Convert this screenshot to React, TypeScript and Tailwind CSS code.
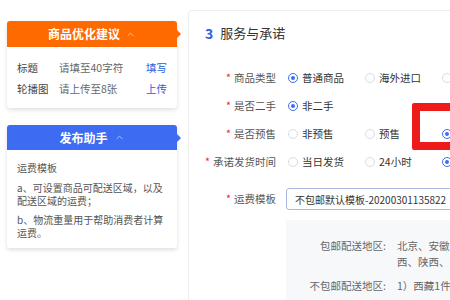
import { ChevronUp } from 'lucide-react';

const font = { fontFamily: '"Noto Sans CJK SC", "Noto Sans", sans-serif' };

const Radio = ({ checked, label }: { checked?: boolean; label?: string }) => (
    <div className="flex w-[77px] shrink-0 items-center gap-[4px]">
        {checked ? (
            <span className="flex h-[10px] w-[10px] items-center justify-center rounded-full border-[1.5px] border-[#3d6ef2] bg-white">
                <span className="h-[4px] w-[4px] rounded-full bg-[#3d6ef2]"></span>
            </span>
        ) : (
            <span className="h-[10px] w-[10px] rounded-full border border-[#d9dce2] bg-white"></span>
        )}
        {label && <span className="text-[10.5px] text-[#333]">{label}</span>}
    </div>
);

const Row = ({ label, children }: { label: string; children?: React.ReactNode }) => (
    <div className="flex h-[28px] items-center">
        <div className="w-[87px] shrink-0 whitespace-nowrap text-right text-[10.5px] text-[#555]">
            <span className="mr-[3px] text-[#f5222d]">*</span>
            {label}
        </div>
        <div className="ml-[12px] flex items-center">{children}</div>
    </div>
);

const App = () => {
    return (
        <div className="relative flex h-[300px] w-[450px] overflow-hidden bg-white" style={font}>
            {/* left side tips */}
            <div className="w-[188px] shrink-0 pl-[7px] pt-[21px]">
                <div className="w-[170px] rounded-[3px] bg-white shadow-[0_2px_4px_rgba(0,0,0,0.13)]">
                    <div className="relative flex h-[26px] items-center justify-center gap-[5px] rounded-t-[3px] bg-[#ff6a00] text-[12px] font-bold text-white">
                        商品优化建议
                        <ChevronUp size={11} strokeWidth={1.5} className="text-white/80" />
                        <span className="absolute right-[-4px] top-[9px] h-0 w-0 border-y-[4px] border-l-[4px] border-y-transparent border-l-[#ff6a00]"></span>
                    </div>
                    <div className="px-[10px] pb-[9px] pt-[11px] text-[10.5px]">
                        <div className="flex h-[20px] items-center">
                            <span className="w-[42px] text-[#444]">标题</span>
                            <span className="flex-1 text-[#666]">请填至40字符</span>
                            <span className="text-[#2a5ed8]">填写</span>
                        </div>
                        <div className="mt-[1px] flex h-[20px] items-center">
                            <span className="w-[42px] text-[#444]">轮播图</span>
                            <span className="flex-1 text-[#666]">请上传至8张</span>
                            <span className="text-[#2a5ed8]">上传</span>
                        </div>
                    </div>
                </div>

                <div className="mt-[17px] w-[170px] rounded-[3px] bg-white shadow-[0_2px_4px_rgba(0,0,0,0.13)]">
                    <div className="relative flex h-[25px] items-center justify-center gap-[6px] rounded-t-[3px] bg-[#3d6cf2] text-[12px] font-bold text-white">
                        发布助手
                        <ChevronUp size={11} strokeWidth={1.5} className="text-white/80" />
                        <span className="absolute right-[-4px] top-[9px] h-0 w-0 border-y-[4px] border-l-[4px] border-y-transparent border-l-[#3d6cf2]"></span>
                    </div>
                    <div className="whitespace-nowrap px-[10px] pb-[9px] pt-[10px] text-[10px] leading-[13px] text-[#555]">
                        <p className="leading-[16px]">运费模板</p>
                        <p className="mt-[5px]">
                            a、可设置商品可配送区域，以及
                            <br />
                            配送区域的运费；
                        </p>
                        <p className="mt-[6px]">
                            b、物流重量用于帮助消费者计算
                            <br />
                            运费。
                        </p>
                    </div>
                </div>
            </div>

            {/* right panel */}
            <div className="mt-[10px] flex-1 rounded-tl-[4px] border border-r-0 border-b-0 border-[#eceef2] bg-white">
                <div className="box-content flex h-[20px] items-center gap-[7px] pl-[16px] pt-[12px]">
                    <span className="text-[14px] font-bold text-[#2f62e0]">3</span>
                    <span className="text-[13px] text-[#333]">服务与承诺</span>
                </div>

                <div className="mt-[21px]">
                    <Row label="商品类型">
                        <Radio checked label="普通商品" />
                        <Radio label="海外进口" />
                        <Radio />
                    </Row>
                    <Row label="是否二手">
                        <Radio checked label="非二手" />
                    </Row>
                    <Row label="是否预售">
                        <Radio label="非预售" />
                        <Radio label="预售" />
                        <Radio checked />
                    </Row>
                    <Row label="承诺发货时间">
                        <Radio label="当日发货" />
                        <Radio label="24小时" />
                        <Radio checked />
                    </Row>
                </div>

                <div className="mt-[12px] flex h-[22px] items-center">
                    <div className="w-[87px] shrink-0 text-right text-[10.5px] text-[#555]">
                        <span className="mr-[3px] text-[#f5222d]">*</span>
                        运费模板
                    </div>
                    <div className="ml-[10px] flex h-[22px] w-[200px] shrink-0 items-center whitespace-nowrap rounded-[3px] border border-[#a9b9df] pl-[8px] text-[10px] text-[#333]">
                        不包邮默认模板-20200301135822
                    </div>
                </div>

                <div className="ml-[97px] mt-[10px] h-[100px] w-[200px] bg-[#f7f8fa] pt-[18px] text-[10.5px] text-[#666]">
                    <div className="flex leading-[16px]">
                        <div className="w-[100px] shrink-0 text-right">包邮配送地区:</div>
                        <div className="ml-[11px] whitespace-nowrap">
                            <div>北京、安徽、</div>
                            <div>西、陕西、</div>
                        </div>
                    </div>
                    <div className="mt-[8px] flex leading-[16px]">
                        <div className="w-[100px] shrink-0 text-right">不包邮配送地区:</div>
                        <div className="ml-[11px] whitespace-nowrap">1）西藏1件内</div>
                    </div>
                </div>
            </div>

            {/* red annotation box */}
            <div className="absolute left-[412px] top-[103px] h-[47px] w-[60px] rounded-[2px] border-[8px] border-[#ee1b1b]"></div>
        </div>
    );
};

export default App;
